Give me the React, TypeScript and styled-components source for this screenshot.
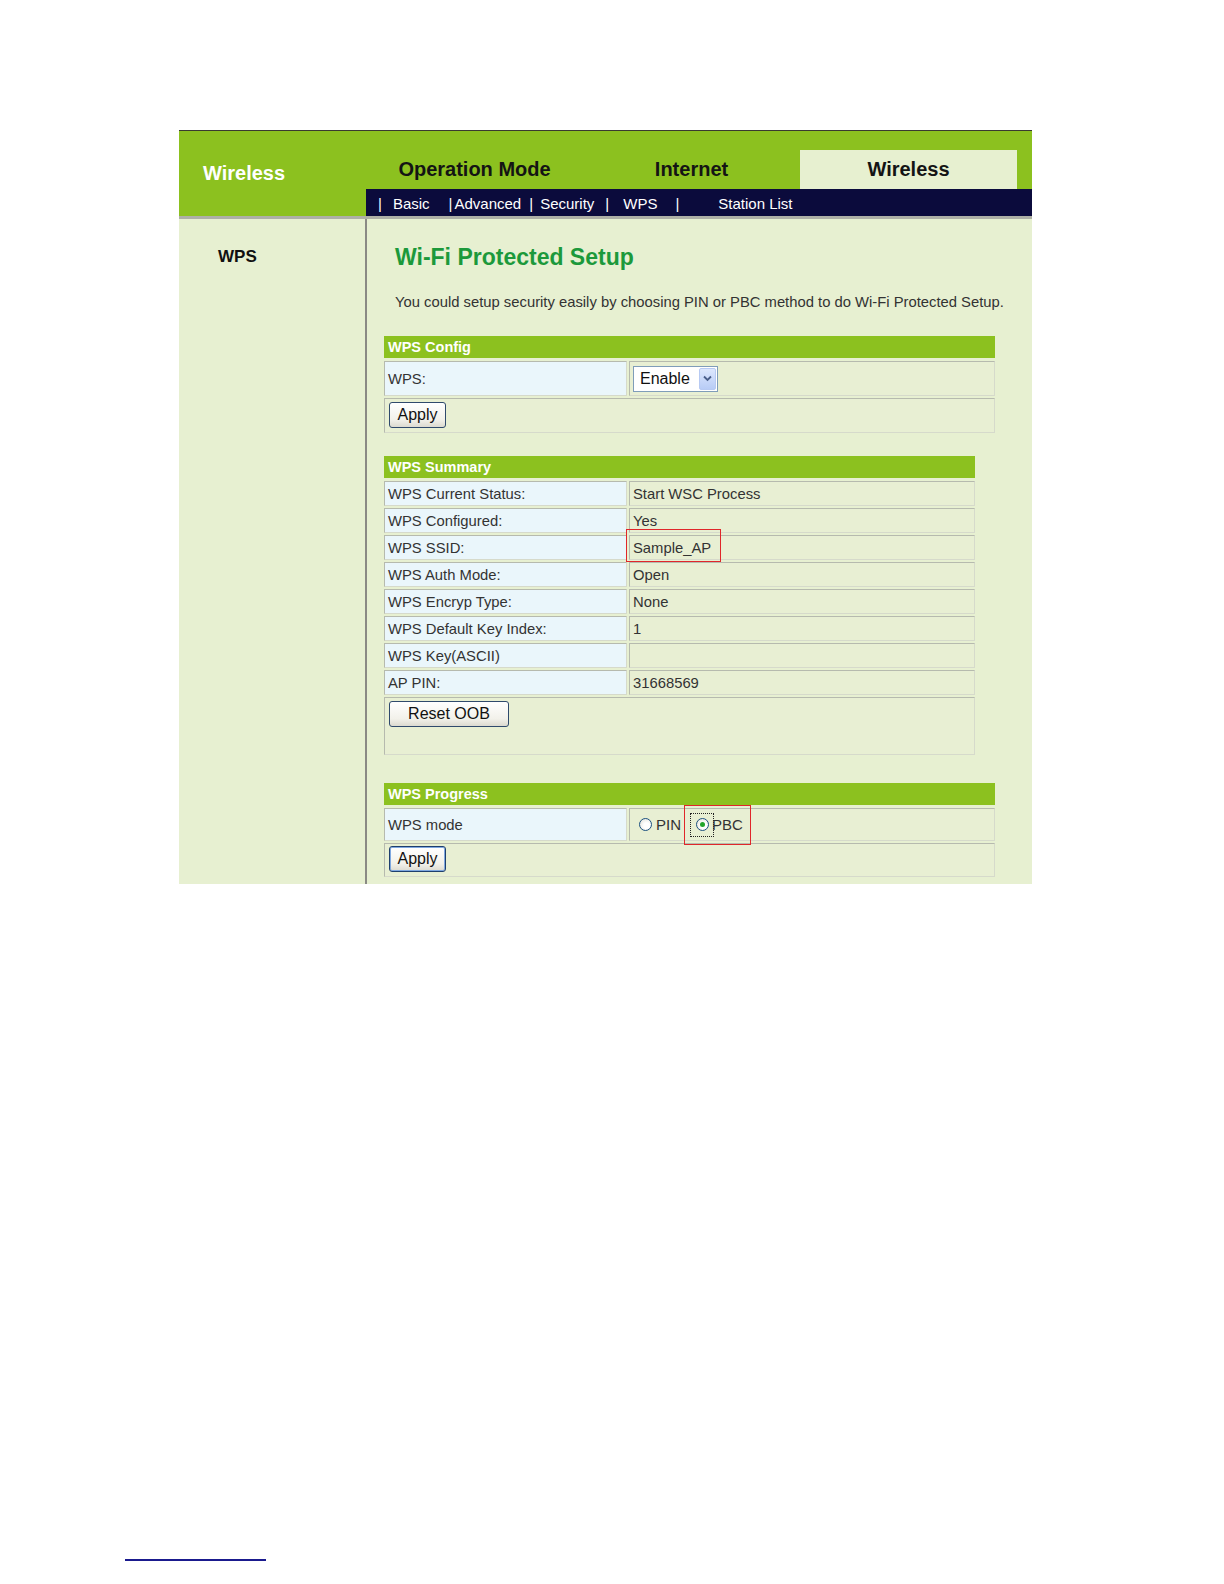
import React from "react";
import styled, { createGlobalStyle, css } from "styled-components";

const GlobalStyle = createGlobalStyle`
  html, body {
    margin: 0;
    padding: 0;
    background: #ffffff;
    font-family: "Liberation Sans", Arial, sans-serif;
    overflow: hidden;
  }
  * { box-sizing: border-box; }
`;

const Page = styled.div`
  padding-top: 130px;
`;

const Frame = styled.div`
  margin-left: 179px;
  width: 853px;
  border-top: 1px solid #3a3a30;
`;

const Header = styled.div`
  display: grid;
  grid-template-columns: 187px 1fr;
  height: 85px;
  background: #8cc11f;
`;

const Brand = styled.div`
  padding: 30px 0 0 24px;
  color: #ffffff;
  font-weight: bold;
  font-size: 20px;
  line-height: 24px;
`;

const HeaderNav = styled.div`
  display: flex;
  flex-direction: column;
  justify-content: flex-end;
`;

const TabRow = styled.div`
  display: flex;
  height: 39px;
`;

const Tab = styled.div<{ $active?: boolean }>`
  width: 217px;
  height: 39px;
  line-height: 39px;
  text-align: center;
  font-weight: bold;
  font-size: 20px;
  color: #141414;
  background: ${(p) => (p.$active ? "#e7f0d0" : "transparent")};
`;

const SubNav = styled.div`
  display: flex;
  align-items: center;
  height: 27px;
  padding: 1px 0 0 12px;
  background: #0b0b3c;
  color: #ffffff;
  font-size: 15px;
`;

const NavItem = styled.span<{ $ml: number }>`
  margin-left: ${(p) => p.$ml}px;
  white-space: nowrap;
`;

const Body = styled.div`
  display: grid;
  grid-template-columns: 188px 1fr;
  border-top: 3px solid #aeb0a6;
  background: #e7f0d1;
`;

const SideBar = styled.div`
  border-right: 2px solid #8a8a84;
  padding: 28px 0 0 39px;
  font-weight: bold;
  font-size: 17px;
  line-height: 20px;
  color: #111;
`;

const Content = styled.div`
  padding: 24px 0 7px 17px;
`;

const Title = styled.h1`
  margin: 0 0 0 11px;
  font-size: 23px;
  line-height: 28px;
  font-weight: bold;
  color: #1c993b;
`;

const Desc = styled.p`
  margin: 22px 0 0 11px;
  font-size: 14.8px;
  line-height: 18px;
  color: #333;
  white-space: nowrap;
`;

const Panel = styled.div<{ $width: number; $mt: number }>`
  display: grid;
  grid-template-columns: 243px 1fr;
  gap: 2px;
  width: ${(p) => p.$width}px;
  margin-top: ${(p) => p.$mt}px;
`;

const PanelHead = styled.div`
  grid-column: 1 / -1;
  height: 22px;
  margin-bottom: 1px;
  padding-left: 4px;
  background: #8cc11f;
  color: #ffffff;
  font-weight: bold;
  font-size: 14.5px;
  line-height: 22px;
`;

const Cell = styled.div<{ $kind: "label" | "value"; $h: number }>`
  position: relative;
  display: flex;
  align-items: center;
  height: ${(p) => p.$h}px;
  padding: 0 3px;
  border: 1px solid;
  border-color: #b6baae #d6dacb #d6dacb #b6baae;
  font-size: 14.8px;
  color: #333;
  white-space: nowrap;
  background: ${(p) => (p.$kind === "label" ? "#eaf6fb" : "#e8efd3")};
`;

const ActionCell = styled.div<{ $h: number; $pt: number }>`
  grid-column: 1 / -1;
  display: flex;
  align-items: flex-start;
  height: ${(p) => p.$h}px;
  padding: ${(p) => p.$pt}px 0 0 4px;
  border: 1px solid;
  border-color: #b6baae #d6dacb #d6dacb #b6baae;
  background: #e8efd3;
`;

const Button = styled.button<{ $width: number; $focused?: boolean }>`
  width: ${(p) => p.$width}px;
  height: 26px;
  padding: 0;
  font-family: "Liberation Sans", Arial, sans-serif;
  font-size: 16px;
  color: #111;
  border-radius: 3px;
  background: linear-gradient(#ffffff, #f2f1ea 70%, #dcdad0);
  ${(p) =>
    p.$focused
      ? css`
          border: 1px solid #1e3f6e;
          box-shadow: inset 0 0 0 1px #7fa8e0;
        `
      : css`
          border: 1px solid #2f4a6c;
        `}
`;

const Select = styled.div`
  display: inline-flex;
  align-items: center;
  width: 85px;
  height: 26px;
  border: 1px solid #7f9db9;
  background: #ffffff;
`;

const SelectText = styled.span`
  padding-left: 6px;
  font-size: 16px;
  color: #111;
`;

const SelectArrow = styled.span`
  display: flex;
  align-items: center;
  justify-content: center;
  width: 17px;
  height: 22px;
  margin: 1px 1px 1px auto;
  border: 1px solid #b7caf3;
  border-radius: 2px;
  background: linear-gradient(#dce7fd, #b8ccf6);
`;

const RadioGroup = styled.div`
  display: flex;
  align-items: center;
  padding-left: 6px;
`;

const RadioOption = styled.span<{ $ml: number }>`
  position: relative;
  display: inline-flex;
  align-items: center;
  margin-left: ${(p) => p.$ml}px;
`;

const FocusBox = styled.span<{ $focused?: boolean }>`
  display: inline-flex;
  align-items: center;
  justify-content: center;
  width: ${(p) => (p.$focused ? "24px" : "13px")};
  height: 24px;
  border: ${(p) => (p.$focused ? "1px dotted #222" : "none")};
`;

const RadioCircle = styled.span<{ $checked?: boolean }>`
  position: relative;
  display: inline-block;
  width: 13px;
  height: 13px;
  border-radius: 50%;
  border: 1px solid #1c5180;
  background: radial-gradient(circle at 60% 60%, #ffffff 30%, #dcdcd2);
  ${(p) =>
    p.$checked &&
    css`
      &::after {
        content: "";
        position: absolute;
        left: 3px;
        top: 3px;
        width: 5px;
        height: 5px;
        border-radius: 50%;
        background: #22a52a;
      }
    `}
`;

const RadioLabel = styled.span<{ $ml: number }>`
  margin-left: ${(p) => p.$ml}px;
  font-size: 15px;
  color: #333;
`;

const Annotation = styled.span<{ $l: number; $t: number; $w: number; $h: number }>`
  position: absolute;
  left: ${(p) => p.$l}px;
  top: ${(p) => p.$t}px;
  width: ${(p) => p.$w}px;
  height: ${(p) => p.$h}px;
  border: 1.5px solid #e0262a;
  pointer-events: none;
`;

const FootRule = styled.div`
  margin: 675px 0 0 125px;
  width: 141px;
  border-top: 2px solid #1a1a8e;
`;

const navItems: { text: string; ml: number }[] = [
  { text: "|", ml: 0 },
  { text: "Basic", ml: 11 },
  { text: "|", ml: 19 },
  { text: "Advanced", ml: 2 },
  { text: "|", ml: 8 },
  { text: "Security", ml: 7 },
  { text: "|", ml: 11 },
  { text: "WPS", ml: 14 },
  { text: "|", ml: 18 },
  { text: "Station List", ml: 39 },
];

const summary: [string, string][] = [
  ["WPS Current Status:", "Start WSC Process"],
  ["WPS Configured:", "Yes"],
  ["WPS SSID:", "Sample_AP"],
  ["WPS Auth Mode:", "Open"],
  ["WPS Encryp Type:", "None"],
  ["WPS Default Key Index:", "1"],
  ["WPS Key(ASCII)", ""],
  ["AP PIN:", "31668569"],
];

const Chevron = () => (
  <svg width="9" height="7" viewBox="0 0 9 7">
    <path d="M1 1.5 L4.5 5 L8 1.5" fill="none" stroke="#4a5f8a" strokeWidth="1.8" />
  </svg>
);

export default function App() {
  return (
    <Page>
      <GlobalStyle />
      <Frame>
        <Header>
          <Brand>Wireless</Brand>
          <HeaderNav>
            <TabRow>
              <Tab>Operation Mode</Tab>
              <Tab>Internet</Tab>
              <Tab $active>Wireless</Tab>
            </TabRow>
            <SubNav>
              {navItems.map((n, i) => (
                <NavItem key={i} $ml={n.ml}>
                  {n.text}
                </NavItem>
              ))}
            </SubNav>
          </HeaderNav>
        </Header>
        <Body>
          <SideBar>WPS</SideBar>
          <Content>
            <Title>Wi-Fi Protected Setup</Title>
            <Desc>
              You could setup security easily by choosing PIN or PBC method to do Wi-Fi Protected Setup.
            </Desc>

            <Panel $width={611} $mt={25}>
              <PanelHead>WPS Config</PanelHead>
              <Cell $kind="label" $h={35}>WPS:</Cell>
              <Cell $kind="value" $h={35}>
                <Select>
                  <SelectText>Enable</SelectText>
                  <SelectArrow>
                    <Chevron />
                  </SelectArrow>
                </Select>
              </Cell>
              <ActionCell $h={35} $pt={3}>
                <Button $width={57}>Apply</Button>
              </ActionCell>
            </Panel>

            <Panel $width={591} $mt={23}>
              <PanelHead>WPS Summary</PanelHead>
              {summary.map(([label, value]) => (
                <React.Fragment key={label}>
                  <Cell $kind="label" $h={25}>{label}</Cell>
                  <Cell $kind="value" $h={25}>
                    {value}
                    {value === "Sample_AP" && <Annotation $l={-4} $t={-7} $w={95} $h={33} />}
                  </Cell>
                </React.Fragment>
              ))}
              <ActionCell $h={58} $pt={3}>
                <Button $width={120}>Reset OOB</Button>
              </ActionCell>
            </Panel>

            <Panel $width={611} $mt={28}>
              <PanelHead>WPS Progress</PanelHead>
              <Cell $kind="label" $h={33}>WPS mode</Cell>
              <Cell $kind="value" $h={33}>
                <RadioGroup>
                  <RadioOption $ml={0}>
                    <FocusBox>
                      <RadioCircle />
                    </FocusBox>
                    <RadioLabel $ml={4}>PIN</RadioLabel>
                  </RadioOption>
                  <RadioOption $ml={9}>
                    <FocusBox $focused>
                      <RadioCircle $checked />
                    </FocusBox>
                    <RadioLabel $ml={-2}>PBC</RadioLabel>
                    <Annotation $l={-6} $t={-8} $w={67} $h={40} />
                  </RadioOption>
                </RadioGroup>
              </Cell>
              <ActionCell $h={34} $pt={2}>
                <Button $width={57} $focused>Apply</Button>
              </ActionCell>
            </Panel>
          </Content>
        </Body>
      </Frame>
      <FootRule />
    </Page>
  );
}
